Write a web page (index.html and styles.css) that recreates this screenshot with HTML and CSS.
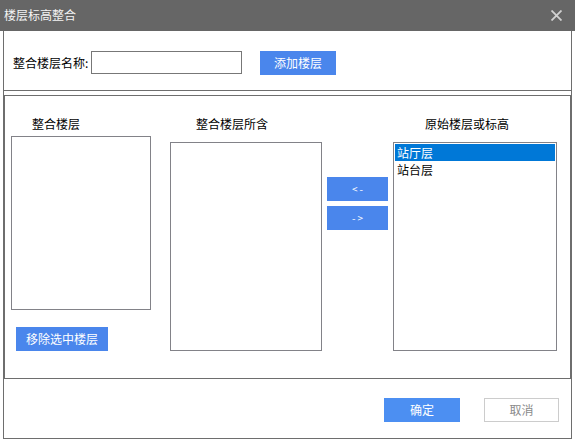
FILE: index.html
```html
<!DOCTYPE html>
<html lang="zh-CN">
<head>
<meta charset="utf-8">
<title>楼层标高整合</title>
<link rel="stylesheet" href="styles.css">
</head>
<body>
<div class="dialog">
  <div class="titlebar">
    <span class="title">楼层标高整合</span>
    <svg class="close" width="11" height="11" viewBox="0 0 11 11"><path d="M0.5 0.5 L10.5 10.5 M10.5 0.5 L0.5 10.5" stroke="#d0d0d0" stroke-width="1.8" fill="none"/></svg>
  </div>
  <div class="frame">
    <div class="top-box">
      <div class="name-row">
        <span class="name-label">整合楼层名称:</span>
        <input class="name-input" type="text">
        <button class="btn btn-add">添加楼层</button>
      </div>
    </div>
    <div class="mid-box">
      <div class="col col-merged">
        <div class="col-label label-1">整合楼层</div>
        <div class="list list-merged"></div>
        <button class="btn btn-remove">移除选中楼层</button>
      </div>
      <div class="col col-contains">
        <div class="col-label label-2">整合楼层所含</div>
        <div class="list list-tall"></div>
      </div>
      <div class="arrows">
        <button class="btn btn-arrow">&lt;-</button>
        <button class="btn btn-arrow">-&gt;</button>
      </div>
      <div class="col col-orig">
        <div class="col-label label-3">原始楼层或标高</div>
        <div class="list list-tall list-orig">
          <div class="item selected">站厅层</div>
          <div class="item">站台层</div>
        </div>
      </div>
    </div>
    <div class="footer">
      <button class="btn btn-ok">确定</button>
      <button class="btn btn-cancel">取消</button>
    </div>
  </div>
</div>
</body>
</html>
```
FILE: styles.css
```css
* { box-sizing: border-box; }
html, body {
  margin: 0;
  padding: 0;
  background: #ffffff;
}
body {
  font-family: "Noto Sans CJK SC", "Microsoft YaHei", sans-serif;
  font-size: 12px;
  color: #000;
}
.dialog {
  width: 575px;
  height: 442px;
}
.titlebar {
  height: 31px;
  background: #666666;
  display: flex;
  align-items: center;
  justify-content: space-between;
  padding: 0 13px 2px 4px;
}
.title {
  color: #f4f4f4;
  font-size: 12px;
  line-height: 14px;
}
.close { display: block; margin-top: 2px; }
.frame {
  margin-left: 3px;
  width: 569px;
  height: 408px;
  border: 1px solid #6e6e6e;
  border-top: none;
}
.top-box {
  height: 60px;
  border-bottom: 1px solid #6e6e6e;
  padding: 20px 0 0 9px;
}
.name-row {
  display: flex;
  align-items: center;
  height: 23px;
}
.name-label {
  width: 78px;
  line-height: 14px;
  padding-top: 1px;
}
.name-input {
  width: 151px;
  height: 23px;
  border: 1px solid #777777;
  margin: 0;
  padding: 0 2px;
  outline: none;
  font: inherit;
}
.btn {
  border: none;
  margin: 0;
  padding: 0;
  background: #4a86ec;
  color: #ffffff;
  font-family: inherit;
  font-size: 12px;
  line-height: 14px;
  height: 24px;
  cursor: default;
}
.btn-add {
  width: 76px;
  height: 24px;
  margin-left: 18px;
}
.mid-box {
  margin-top: 4px;
  height: 284px;
  border: 1px solid #6e6e6e;
  display: flex;
  align-items: flex-start;
  padding: 21px 0 0 6px;
}
.col {
  display: flex;
  flex-direction: column;
  align-items: flex-start;
}
.col-label {
  line-height: 14px;
  height: 14px;
}
.label-1 { padding-left: 21px; }
.label-2 { padding-left: 26px; }
.label-3 { padding-left: 32px; }
.col-merged { width: 140px; }
.col-contains { width: 152px; margin-left: 19px; }
.col-orig { width: 164px; margin-left: 5px; }
.list {
  border: 1px solid #828288;
  background: #fff;
  width: 100%;
}
.list-merged {
  height: 174px;
  margin-top: 5px;
}
.list-tall {
  height: 209px;
  margin-top: 11px;
}
.list-orig { padding: 1px; }
.item {
  height: 17px;
  line-height: 17px;
  padding-left: 2px;
  font-size: 12px;
}
.item.selected {
  background: #0078d7;
  color: #ffffff;
}
.btn-remove {
  width: 92px;
  margin-top: 17px;
  margin-left: 5px;
}
.arrows {
  width: 61px;
  margin-left: 5px;
  margin-top: 60px;
  display: flex;
  flex-direction: column;
  gap: 5px;
}
.btn-arrow {
  width: 61px;
  font-size: 10px;
  letter-spacing: 2px;
  text-indent: 2px;
}
.footer {
  display: flex;
  justify-content: flex-end;
  gap: 24px;
  padding: 19px 12px 0 0;
}
.btn-ok {
  width: 76px;
  background: #4c8ff2;
}
.btn-cancel {
  width: 75px;
  background: #ffffff;
  border: 1px solid #cccccc;
  color: #8a8a8a;
}
```
